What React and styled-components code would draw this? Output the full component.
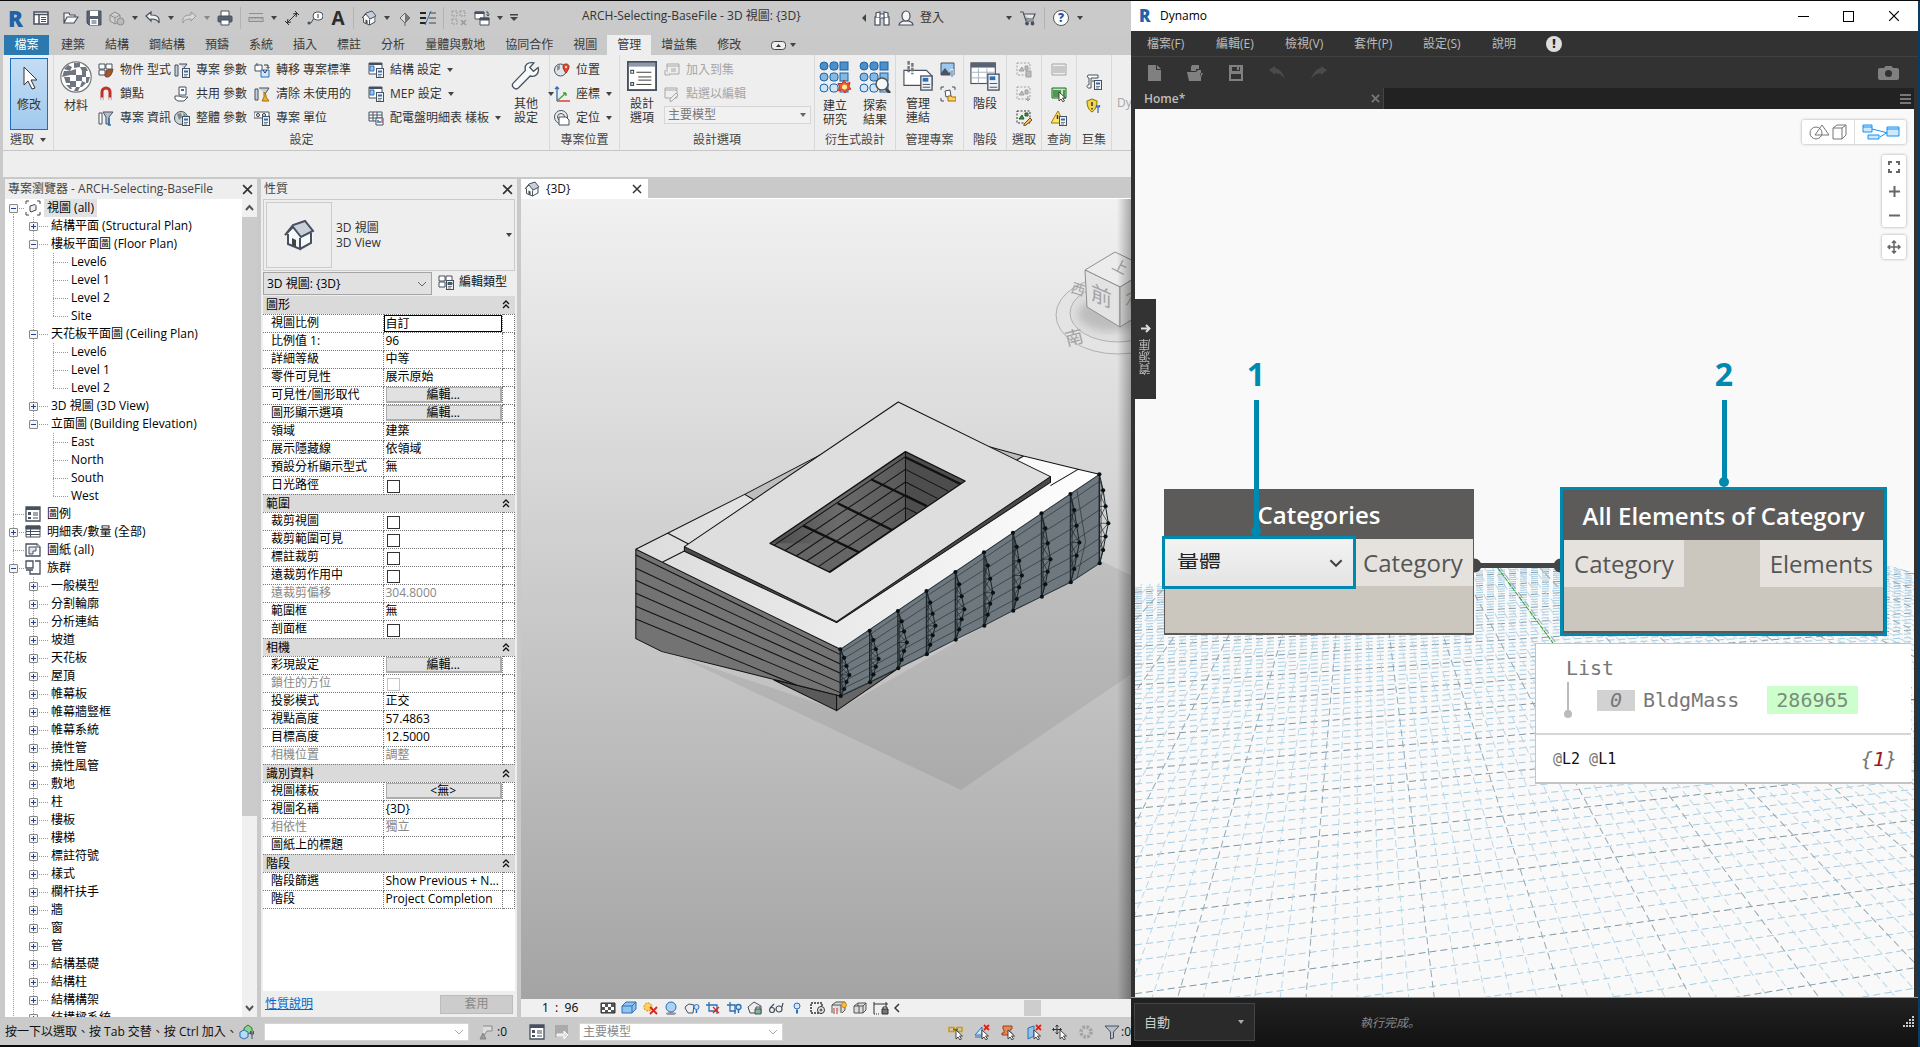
import React from 'react';
import styled, { createGlobalStyle, css } from 'styled-components';

const TEAL = '#0089b0';

const GlobalStyle = createGlobalStyle`
  * { box-sizing: border-box; }
  body {
    margin: 0;
    background: #000;
    color: #111;
    font-family: "Open Sans", "Noto Sans CJK TC", sans-serif;
    font-size: 12px;
    line-height: 16px;
    overflow: hidden;
  }
  button, select, input {
    font: inherit;
    color: inherit;
  }
  button {
    padding: 0;
    border: 0;
    background: none;
  }
  svg { display: block; flex-shrink: 0; }
`;

/* ---------- icons ---------- */

const line = '#47505f';
const blue = '#2c6fb5';
const pale = '#dfe6ee';

const cursorShape = <path d="M8 6v9l2-2 2 3 1.5-1-2-3h3z" fill="#fff" stroke="#333" strokeWidth=".9" />;
const badge = <g><rect x="8.5" y="6.5" width="7" height="9" fill="#eef3f8" stroke={line} /><path d="M10 8.500h4v2h-4z" fill={blue} /><path d="M10 12.500h4M10 14h3" stroke={line} strokeWidth="0.7" /></g>;
const redX = <path d="M10 1l5 5M15 1l-5 5" stroke="#d9261c" strokeWidth="1.8" />;
const bulb = <g><circle cx="12.5" cy="7" r="2.5" fill="#cfe6ff" stroke={blue} /><path d="M12.500 10v3" stroke={blue} strokeWidth="1.5" /></g>;

const icons = {
  panel: <g><rect x="1" y="2" width="14" height="12" fill="#fff" stroke={line} strokeWidth="1.5" /><path d="M1 4.500h14M6 5v9" stroke={line} strokeWidth="1.5" /><path d="M8 7.500h5M8 9.500h5M8 11.500h5" stroke={line} /></g>,
  open: <path d="M1 13V3h5l1 2h5v2M1 13l3-6h11l-4 6z" fill="#f7f7f7" stroke={line} strokeWidth="1.2" />,
  save: <g><path d="M1 1h14v14H3l-2-2z" fill="#5a6374" stroke={line} /><path d="M4 1h8v5H4zM4 9h8v6H4z" fill="#fff" /><path d="M5.500 11h5M5.500 13h5" stroke={line} /></g>,
  sync: <g fill="#d0d0d0" stroke="#8d8d8d"><path d="M1 5l5-3 5 3v6l-5 3-5-3zM1 5l5 3 5-3M6 8v6" /><circle cx="11.5" cy="11.5" r="3.5" fill="#bbb" /></g>,
  undo: <path d="M1 6l5-4v3c5 0 9 1 8 8-1-3-3-4-8-4v2z" fill="#f2f2f2" stroke={line} strokeWidth="1.2" />,
  redo: <path d="M15 6l-5-4v3c-5 0-9 1-8 8 1-3 3-4 8-4v2z" fill="#d8d8d8" stroke="#999" />,
  print: <g><path d="M4 7V1h8v6" fill="#fff" stroke={line} /><rect x="1" y="6" width="14" height="6" rx="1" fill="#5a6374" stroke={line} /><path d="M4 10h8v5H4z" fill="#fff" stroke={line} /></g>,
  measure: <g fill="#c2c2c2" stroke="#8d8d8d"><path d="M1 3.500h14" /><rect x="1" y="7.5" width="14" height="4" /><path d="M4 7v2M7 7v2M10 7v2M13 7v2" /></g>,
  dim: <path d="M3 13L13 3M1 11l4 4M11 1l4 4M13 3l-4 1M13 3l-1 4M3 13l1-4M3 13l4-1" fill="none" stroke="#333" />,
  tag: <g><path d="M1 13h3l3-5" fill="none" stroke={line} /><circle cx="2" cy="13" r="1.5" fill={line} /><rect x="6" y="2" width="10" height="8" rx="4" fill="#fff" stroke={line} /><path d="M11 4v4" stroke="#333" /></g>,
  house: <g stroke={line}><path d="M2 7l3-4 6-2 4 5v5l-6 4-7-3z" fill="#f6f8fa" stroke="none" /><path d="M1 8l4-5 6-2 4 5-6 3-4-5z" fill="#c9d0da" /><path d="M2.500 7.500v5L8.500 15V9.500M8.500 15l5.500-3V7" fill="none" /><path d="M4.500 9.500l2 1v3.500l-2-1z" fill="#444" stroke="none" /></g>,
  diamond: <g><path d="M8 3l5 5-5 5-5-5z" fill="#ddd" stroke="#666" /><path d="M8 3l5 5-5 5z" fill="#777" /><path d="M8 13v3" stroke="#666" /></g>,
  thin: <g><path d="M0 3h6M0 8h6M0 13h6" stroke="#222" strokeWidth="2" /><path d="M9 3h7M9 8h7M9 13h7" stroke="#222" strokeWidth="0.8" /><path d="M11 1L5 15" stroke={blue} /></g>,
  hidden: <g fill="none" stroke="#999"><path d="M1 1h5v5H1zM9 1h5v5H9zM1 9h5v5H1z" strokeDasharray="2 1" /><path d="M10 10l5 5M15 10l-5 5" strokeWidth="1.5" /></g>,
  switch: <g fill="#fff" stroke={line}><path d="M1 2h9v7H1zM6 8h9v7H6z" /><path d="M6 8h9v2H6zM1 2h9v1.500H1z" fill={line} /><path d="M12 2h2v4M12.500 4.500L14 6l1.500-1.500" fill="none" /></g>,
  binoc: <g fill="#fff" stroke={line} strokeWidth="1.2"><rect x="1" y="7" width="5" height="8" /><rect x="10" y="7" width="5" height="8" /><path d="M2 7V3l4-1v5M14 7V3l-4-1v5M6 4h4v4H6" /></g>,
  user: <g fill="#f5f5f5" stroke={line} strokeWidth="1.2"><path d="M1 15c0-3 3-3 4-4h6c1 1 4 1 4 4z" /><ellipse cx="8" cy="6" rx="4" ry="5" /></g>,
  cart: <g fill="none" stroke={line} strokeWidth="1.2"><path d="M0 2h3l3 9h8M4 4h11l-2 5H5" fill="#e7e7e7" /><circle cx="7" cy="13.5" r="1.3" fill={line} /><circle cx="12.5" cy="13.5" r="1.3" fill={line} /></g>,
  material: (
    <g>
      <circle cx="8" cy="8" r="7.6" fill="#fff" stroke="#777" strokeWidth="0.6" />
      <path
        d="M2 4l2-2 2 1-1 2zM7 1h3v2l-3 .500zM10 3h3l1 2h-3zM5 5l3-1v3H5zM11 5h2v3h-2zM1 8l1-3h3v2zM8 7h3v3H8zM2 8h3v3H3zM13 8h2l-1 3h-1zM5 10h3v3H5zM11 10l2 1-2 2h-1zM8 13h2l-1 2H7zM3 12h2l1 2H5z"
        fill="#6f7681"
      />
    </g>
  ),
  objstyle: <g stroke={line} fill="#fff"><path d="M1 2h6v5H1zM8 2h6v5H8zM1 8h6v5H1z" /><path d="M8 9c4-3 5 0 7-2-1 4-2 8-6 8-2 0-3-2-1-3z" fill="#a5572c" stroke="#6d3a1d" /></g>,
  magnet: <g fill="none"><path d="M4 14V6a4 4 0 018 0v8" stroke="#c23127" strokeWidth="3" /><path d="M2.500 13h3M10.500 13h3" stroke="#ddd" strokeWidth="3" /></g>,
  projinfo: <g stroke={line}><path d="M1 3h3v11H1z" fill="#fff" /><path d="M5 2h10l-4 5v7h-3V7z" fill="#b6bfcb" /><path d="M11 8v7M10 15h3" stroke={blue} strokeWidth="1.5" /></g>,
  param: <g><path d="M1 3h3v11H1zM5 2h8l-3 4" fill="#c9d0da" stroke={line} />{badge}</g>,
  shared: <g><path d="M5 1h7v8H5z" fill="#fff" stroke={line} /><path d="M7 3h3v2H7z" fill={blue} /><path d="M1 10h4l3 1h6l-4 4H4l-3-2z" fill="#fff" stroke={line} /></g>,
  globe: <g><circle cx="7" cy="8" r="6.5" fill="#cfd6dc" stroke={line} /><path d="M3 4l4-1 1 4-3 3zM9 3l3 2-2 3z" fill="#7c8a80" />{badge}</g>,
  transfer: <g><path d="M1 3h7v6H1zM3 1v3" fill="#fff" stroke={line} /><path d="M7 8h8v7H7z" fill="#cfe6ff" stroke={blue} /><path d="M9 8l2 3 2-3M10 3h4v3M12.500 5L14 6.500 15.500 5" fill="none" stroke="#333" /></g>,
  purge: <g><path d="M1 3h3v11H1zM5 2h10l-4 6" fill="#c9d0da" stroke={line} /><path d="M10 6l2 3v2l3 4H8l2-4z" fill="#f0b429" stroke="#a86d09" /></g>,
  units: <g><path d="M0 2h15v6H0z" fill="#fff" stroke={line} /><circle cx="4" cy="5" r="1.5" fill="none" stroke="#333" /><circle cx="10" cy="5" r="1.5" fill="none" stroke="#333" />{badge}</g>,
  structset: <g><path d="M1 1h13v11H1z" fill="#fff" stroke={line} /><path d="M1 1h13v2H1z" fill={line} /><path d="M2 4h4v5H2z" fill="#9fc4ea" stroke={blue} />{badge}</g>,
  paneltpl: <g stroke={line}><path d="M1 2h13v9H1zM1 5h13M1 8h13M5 2v9M9 2v9" fill="#fff" /><path d="M8 8h7v7H8z" fill="#fff" /><path d="M10 13v-3M12 13v-2" stroke={blue} strokeWidth="1.5" /><path d="M14 13v-4" stroke="#c23127" /></g>,
  wrench: <path d="M14.500 3.500l-2.500 2-2-2 2.200-2.500C9 .300 7 2 7.700 5L1.200 11.800c-1.500 1.700 1.200 4 2.700 2.600L10.200 8c3 .800 5-1.500 4.300-4.500z" fill="#f8f9fa" stroke={line} strokeWidth="0.7" />,
  location: <g><circle cx="6.5" cy="8" r="6" fill="#dfe4e8" stroke={line} /><path d="M3 4l3-1v4l-3 2z" fill="#8d9994" /><path d="M12 2c4 0 4 4 0 9-4-5-4-9 0-9z" fill="#e0492f" stroke="#a32c17" /><circle cx="12" cy="5" r="1" fill="#fff" /></g>,
  coords: <g fill="none" strokeWidth="1.3"><path d="M3 15V1M1 3l2-2 2 2" stroke={blue} /><path d="M3 15h13" stroke="#d9261c" /><path d="M4 14l8-7M12 7H9M12 7v3" stroke="#36a63a" /></g>,
  position: <g><circle cx="7" cy="7" r="6.5" fill="none" stroke={line} /><circle cx="7" cy="7" r="3.5" fill="none" stroke={line} /><path d="M5 7h7l3 3v5H5z" fill="#fff" stroke={line} /></g>,
  options: <g><rect x="0.5" y="0.5" width="15" height="15" fill="#fff" stroke={line} /><path d="M1 1h14v2H1z" fill="#8d98a8" /><path d="M2 5h1.500v1.500H2zM2 11.500h1.500V13H2z" stroke={line} fill="none" strokeWidth="0.6" /><path d="M5 6h8M6 8.500h7M6 10.200h7M5 12.500h8" stroke="#333" strokeWidth="0.5" /></g>,
  addset: <g fill="#eee" stroke="#a9a9a9"><path d="M3 2h12v10H3zM3 4h12" /><path d="M7 7h5M7 9h5M1 8v5h5" /></g>,
  pickedit: <g fill="#eee" stroke="#a9a9a9"><path d="M1 2h12v10H1zM1 4h12" /><path d="M6 13l6-6 2 2-6 6-2 .500z" /></g>,
  manage: <g><path d="M.500 5h12l3 3v5H.500z" fill="#fff" stroke={line} strokeWidth="0.6" /><path d="M3 0v6M5 1v6" stroke="#777" strokeWidth="1.3" strokeDasharray="2 .6" /><rect x="9.5" y="8" width="6" height="7.5" fill="#eef3f8" stroke={line} strokeWidth="0.7" /><path d="M10.500 9h3v2h-3z" fill={blue} /><path d="M10.500 12.500h4M10.500 14h4" stroke={line} strokeWidth="0.5" /></g>,
  decal: <g><path d="M1 1h13v12H1z" fill="#9cc7ee" stroke={line} /><path d="M1 11l4-5 4 5 2-2 2 2v2H1z" fill="#4a5563" /><path d="M12 7v7" stroke="#f4f4f4" strokeWidth="3" /><path d="M12 8v7" stroke={blue} /></g>,
  starting: <g fill="none" stroke={line}><path d="M1 4V1h3M12 1h3v3M1 12v3h3" /><path d="M5 5l5-1 1 6-5 1z" fill="#fff" /><path d="M8 10h3l1 1h4v4H8z" fill="#ffd25c" stroke="#a86d09" /></g>,
  phase: <g><rect x="0.5" y="1" width="13" height="11" fill="#fff" stroke={line} strokeWidth="0.6" /><path d="M.500 1h13v2.500H.500z" fill="#5a6374" /><path d="M1 6h12M1 9h12M4.500 4v8M9 4v8" stroke="#a8b0bb" strokeWidth="0.5" /><rect x="9.5" y="7" width="6" height="8.5" fill="#eef3f8" stroke={line} strokeWidth="0.7" /><path d="M10.500 8.200h3v2h-3z" fill={blue} /><path d="M10.500 12h4M10.500 14h4" stroke={line} strokeWidth="0.5" /></g>,
  selsave: <g fill="none" stroke="#a0a0a0"><path d="M1 1h13v12H1z" strokeDasharray="2 1.5" /><path d="M3 9l3-4 2 4zM9 4h3v4H9zM10 9h5v6h-5z" fill="#bbb" /></g>,
  selload: <g fill="none" stroke="#a0a0a0"><path d="M1 1h13v12H1z" strokeDasharray="2 1.5" /><path d="M3 9l3-4 2 4zM9 4h3v4H9zM12 10v5l-2-2M12 15l2-2" fill="#bbb" /></g>,
  seledit: <g fill="none" stroke="#333"><path d="M1 1h13v12H1z" strokeDasharray="2 1.5" /><path d="M3 9l3-4 2 4zM9 3h3v3H9z" fill="#3b8f3f" stroke="#246227" /><path d="M8 14l6-6 2 2-6 5-2 1z" fill="#f8c35a" stroke="#6d4a1d" /></g>,
  ids: <g stroke="#a3a3a3"><path d="M1 2h14v11H1z" fill="#eee" /><path d="M3 4v7M5 4v7M7 4v7M9 4v7M11 4v7M13 4v7" /></g>,
  idsel: <g><path d="M1 2h14v10H1z" fill="#bfe8bf" stroke="#176b1b" /><path d="M3 4v7M5 4v7M7 4v7M9 4v7M13 4v7" stroke="#176b1b" strokeWidth="1.3" />{cursorShape}</g>,
  warn: <g><path d="M7 1l6 12H0z" fill="#ffe46b" stroke="#9c7a00" /><path d="M6.500 5v4" stroke="#333" strokeWidth="1.5" />{badge}</g>,
  macro: <g><path d="M2 1h10v3H5v10H2c-2-2-1-3 1-3V4C1 4 1 2 2 1z" fill="#fff" stroke={line} /><path d="M6 7h4" stroke={line} />{badge}</g>,
  macrosec: <g><path d="M1 3l5-2 5 2c0 6-2 9-5 11C3 12 1 9 1 3z" fill="#f3d34b" stroke="#8c7200" /><path d="M6 4v4M6 10v1.500" stroke="#333" strokeWidth="1.5" /><path d="M12 7v8M10.500 7v2h3V7" fill="none" stroke={blue} strokeWidth="1.2" /></g>,
  views: <g fill="none" stroke="#444"><path d="M1 4V1h3M12 1h3v3M1 12v3h3M15 12v3h-3" /><path d="M5 6l5-1.500 1 1V10l-5 2-1-1z" fill="#f0f0f0" /></g>,
  legend: <g><path d="M1 1h14v14H1z" fill="#fff" stroke={line} strokeWidth="1.3" /><path d="M1 1h14v3H1z" fill={line} /><path d="M3 6h3v3H3zM3 11h3v2H3z" fill={line} /><path d="M8 7h5M8 9h5M8 12h5" stroke={line} /></g>,
  schedule: <g stroke={line}><path d="M1 2h14v11H1z" fill="#fff" /><path d="M1 2h14v3H1z" fill={line} /><path d="M1 7.500h14M1 10.500h14M5.500 5v8" /></g>,
  sheets: <g stroke={line} fill="#fff"><path d="M1 2h11l3 3v9H1z" strokeWidth="1.3" /><path d="M4 5h7v4H8v3H4z" fill={pale} /><path d="M12 2v3h3" /></g>,
  family: <g stroke={line} fill="#fff" strokeWidth="1.3"><path d="M1 1h7v7H1zM1 10h7M10 1h5v13H5v-4" /></g>,
  edittype: <g fill="#fff" stroke={line}><path d="M1 2h6v5H1zM8 2h6v5H8zM1 8h6v5H1z" />{badge}</g>,
  worksets: <g><path d="M5 4l4-3 4 3v4l-4 2-4-2z" fill="#8fd18f" stroke="#2d7a30" /><path d="M1 8l4-2 4 2v5l-4 2-4-2z" fill="#b7dcf7" stroke={blue} /><path d="M13 8v7M11.500 7v3h3V7" fill="none" stroke={line} /></g>,
  press: <g fill="#ddd" stroke="#888"><path d="M5 2h9v5H9L5 13" /><path d="M2 15l3-6 3 6z" fill="#999" /></g>,
  grayopt: <g><path d="M1 1h13v12H1z" fill="#aaa" /><path d="M3 10h7v-3l4 4-4 4v-3H3z" fill="#ddd" stroke="#fff" /></g>,
  detail: <g><path d="M1 3h14v10H1z" fill="#555" stroke="#333" /><path d="M2 4h3v3H2zM8 4h3v3H8zM5 7h3v3H5zM11 7h3v3h-3zM2 10h3v2H2zM8 10h3v2H8z" fill="#fff" /></g>,
  box: <g stroke={blue}><path d="M1 6l4-4h10v7l-4 4H1z" fill="#8fc4f0" /><path d="M1 6h10v7M11 6l4-4" fill="none" /></g>,
  sun: <g><circle cx="6" cy="7" r="4" fill="#ffd25c" stroke="#c98a12" strokeDasharray="2 1" /><path d="M8 7l7 7M15 7l-7 7" stroke="#d9261c" strokeWidth="1.8" /></g>,
  shadow: <g><ellipse cx="8" cy="13.5" rx="5" ry="1.5" fill="#999" /><circle cx="8" cy="7" r="5" fill="#a9d2f5" stroke={blue} /></g>,
  render: <g><path d="M2 6l3-2 5 1-1 8H4l-3-5z" fill="#eee" stroke={line} />{bulb}</g>,
  crop: <g fill="none" stroke={blue} strokeWidth="1.3"><path d="M1 5h11v9M4 2v9h9" /><path d="M8 7l6 6M14 7l-6 6" stroke="#d9261c" /></g>,
  cropshow: <g fill="none" stroke={blue} strokeWidth="1.3"><path d="M1 5h8v9M4 2v9h6" />{bulb}</g>,
  lockhouse: <g stroke={line}><path d="M1 7l6-5 7 4v7H3z" fill="#eee" /><path d="M8 9h6v5H8z" fill="#7fb893" /><path d="M9 9V7h4v2" fill="none" /></g>,
  glasses: <g fill="none" stroke={line} strokeWidth="1.2"><circle cx="4" cy="10" r="2.5" /><circle cx="11" cy="9" r="3" /><path d="M2 8l4-4M14 7l1-4" /></g>,
  bulbonly: <g><circle cx="8" cy="6" r="3" fill="#cfe6ff" stroke={blue} /><path d="M8 9.500v4" stroke={blue} strokeWidth="2" /></g>,
  worksh: <g fill="none" stroke="#333"><path d="M1 3h11v10H1z" strokeDasharray="2 1" strokeWidth="1.5" /><circle cx="11" cy="10" r="3.5" fill="#eee" /><circle cx="11" cy="10" r="1" /></g>,
  analyt: <g fill="none" stroke="#555"><path d="M1 5l4-3h9v8l-3 3M1 5h9v8M1 5v8" fill="#ddd" /><path d="M3 8v6M6 8v6" stroke="#c23127" /><circle cx="13" cy="5" r="2.5" fill="#ffbe3d" stroke="#c98a12" /></g>,
  displace: <g fill="#ddd" stroke="#555"><path d="M2 6l4-3h8v7l-3 3H2zM2 6h9v7M11 6l3-3M6 6V3M7 13V6" /></g>,
  constrain: <g fill="none" stroke="#333"><path d="M1 2v12M1 4h14M13 2v5" /><path d="M1 14h6" strokeDasharray="1 1" /><path d="M9 9h6v5H9z" fill="#777" /><path d="M10 9V7h4v2" /></g>,
  link: <g><path d="M1 3.500h5v4H1zM9 3.500h5v4H9z" fill="none" stroke="#d49b00" strokeWidth="1.6" /><path d="M5 5.500h5" stroke="#8c6600" strokeWidth="1.5" />{cursorShape}</g>,
  underlay: <g><path d="M1 11l7-8v8zM1 13h8" fill="#cfe6ff" stroke={blue} />{redX}{cursorShape}</g>,
  pin: <g><path d="M3 2h9v3l-2 1v3h2v2H2V9h2V6L3 5z" fill="#e98552" stroke="#9c4316" />{cursorShape}</g>,
  face: <g><path d="M2 4l6-2v10l-6 3z" fill="#8fc4f0" stroke={blue} />{redX}{cursorShape}</g>,
  drag: <g><path d="M5 1v9M.500 5.500h9M3.500 2.500L5 1l1.500 1.500M3.500 8.500L5 10l1.500-1.500M2 4L.500 5.500 2 7M8 4l1.500 1.500L8 7" fill="none" stroke="#333" />{cursorShape}</g>,
  spinner: <circle cx="8" cy="8" r="5" fill="none" stroke="#a3a3a3" strokeWidth="3.5" strokeDasharray="2.5 1.4" />,
  filter: <path d="M1 2h14l-5.500 6v6l-3 1V8z" fill="#b6bfcb" stroke={line} />,
};

const Icon = ({ name, size = 16 }) => (
  <svg width={size} height={size} viewBox="0 0 16 16" fill="none" aria-hidden="true">{icons[name]}</svg>
);

const StudyIcon = ({ explore }) => (
  <svg width="32" height="32" viewBox="0 0 32 32" stroke="#1b64a8" aria-hidden="true">
    {[1, 12, 23].map((y, row) => (
      <g key={y} fill={['#4d90c9', '#86b8e0', '#cfe4f5'][row]}>
        <circle cx="5" cy={y + 4} r="4" />
        <rect x="11" y={y} width="8" height="8" rx="3" />
        <rect x="21" y={y} width="8" height="8" />
      </g>
    ))}
    {explore
      ? <g><circle cx="23" cy="23" r="6" fill="#f4f8fb" stroke="#555" strokeWidth="1.5" /><path d="M27 28l4 4" stroke="#444" strokeWidth="3" /></g>
      : <g><path d="M25 19l2 3.500 4-1-1 4 2 2.500-4 1-2 3-2.500-3-4 .500 1-4-1.500-3h4z" fill="#f05a28" stroke="#c23127" /><circle cx="25.5" cy="26" r="2.5" fill="#fff0a0" stroke="none" /></g>}
  </svg>
);

const CaretIcon = ({ color = '#444' }) => (
  <svg width="6" height="4" viewBox="0 0 6 4" aria-hidden="true"><path d="M0 0h6L3 4z" fill={color} /></svg>
);

const ChevronDown = ({ color = '#666', size = 10, weight = 1 }) => (
  <svg width={size} height={size} viewBox="0 0 10 10" fill="none" stroke={color} strokeWidth={weight} aria-hidden="true"><path d="M1 3l4 4 4-4" /></svg>
);

const CloseX = ({ size = 10, color = '#333', weight = 1.5 }) => (
  <svg width={size} height={size} viewBox="0 0 10 10" stroke={color} strokeWidth={weight} aria-hidden="true"><path d="M1 1l8 8M9 1L1 9" /></svg>
);

/* ---------- shell ---------- */

const Shell = styled.div`
  display: grid;
  grid-template-columns: minmax(0, 1131fr) minmax(0, 789fr);
  height: 100vh;
  padding-top: 1px;
  background: #0b0b0b;
`;

const Revit = styled.div`
  display: flex;
  flex-direction: column;
  min-width: 0;
  min-height: 0;
  margin-bottom: 2px;
  background: #c9c9c9;
  overflow: hidden;
`;

const TitleBar = styled.header`
  display: flex;
  align-items: center;
  height: 34px;
  flex-shrink: 0;
  background: #cacaca;
  color: #333;
`;

const QuickBar = styled.div`
  display: flex;
  align-items: center;
  gap: 7px;
  width: 574px;
  padding-left: 8px;
  flex-shrink: 0;
`;

const LogoLetter = styled.span`
  width: 18px;
  font-size: ${({ $size }) => $size || 22}px;
  line-height: 20px;
  font-weight: 800;
  color: #1f62a8;
`;

const IconButton = styled.button`
  display: flex;
  align-items: center;
  justify-content: center;
  flex-shrink: 0;
`;

const TextTool = styled.button`
  width: 16px;
  font-size: 19px;
  line-height: 20px;
  font-weight: 700;
  color: #2c2c2c;
`;

const BarDivider = styled.span`
  width: 1px;
  height: 22px;
  background: #b3b3b3;
`;

const BarGap = styled.span`
  width: 0;
`;

const WindowTitle = styled.h1`
  margin: 0;
  width: 288px;
  flex-shrink: 0;
  padding: 0 0 4px 8px;
  font-size: 12px;
  font-weight: 400;
  line-height: 18px;
  white-space: nowrap;
`;

const InfoCenter = styled.div`
  display: flex;
  align-items: center;
  gap: 8px;
`;

const SignIn = styled.button`
  display: flex;
  align-items: center;
  gap: 6px;
  width: 100px;
`;

const HelpCircle = styled.button`
  width: 16px;
  height: 16px;
  border: 1px solid #555;
  border-radius: 50%;
  background: #fff;
  color: #2457b0;
  font-weight: 800;
  line-height: 14px;
`;

const TabBar = styled.nav`
  display: flex;
  align-items: center;
  height: 20px;
  padding-left: 4px;
  flex-shrink: 0;
`;

const FileTab = styled.button`
  width: 45px;
  height: 20px;
  margin-right: 2px;
  background: #2a7ab0;
  color: #fff;
`;

const RibbonTab = styled.button`
  height: 20px;
  padding: 0 10px;
  white-space: nowrap;
  color: #3a3a3a;
  background: ${({ $active }) => ($active ? '#eeeeee' : 'transparent')};
`;

const RibbonToggle = styled.button`
  display: flex;
  align-items: center;
  gap: 4px;
  margin-left: 20px;
`;

const Ribbon = styled.div`
  display: flex;
  height: 96px;
  flex-shrink: 0;
  margin-left: 3px;
  background: #eeeeee;
  border-bottom: 1px solid #c6c6c6;
  overflow: hidden;
`;

const Panel = styled.section`
  display: flex;
  flex-direction: column;
  width: ${({ $width }) => $width}px;
  flex-shrink: 0;
  padding-top: 3px;
  border-right: 1px solid #d8d8d8;
`;

const PanelBody = styled.div`
  display: flex;
  justify-content: ${({ $center }) => ($center ? 'center' : 'flex-start')};
  gap: 4px;
  height: 72px;
  padding: 0 4px;
`;

const PanelTitle = styled.h2`
  display: flex;
  align-items: center;
  justify-content: center;
  gap: 6px;
  margin: 0;
  height: 20px;
  font-size: 12px;
  font-weight: 400;
  color: #444;
  white-space: nowrap;
`;

const BigButton = styled.button`
  display: flex;
  flex-direction: column;
  align-items: center;
  gap: 6px;
  width: 36px;
  flex-shrink: 0;
  padding-top: 3px;
  line-height: 14px;
  color: #333;
  ${({ $pressed }) => $pressed && css`
    width: 38px;
    margin-left: 3px;
    border: 1px solid #1a6fc4;
    background: linear-gradient(#c4dcf4, #a2caee);
  `}
`;

const SmallColumn = styled.div`
  display: flex;
  flex-direction: column;
  justify-content: ${({ $center }) => ($center ? 'center' : 'flex-start')};
  width: ${({ $width }) => ($width ? `${$width}px` : 'auto')};
  flex-shrink: 0;
`;

const SmallButton = styled.button`
  display: flex;
  align-items: center;
  gap: 6px;
  height: 24px;
  white-space: nowrap;
  color: ${({ disabled }) => (disabled ? '#a6a6a6' : '#333')};
`;

const ColumnDivider = styled.span`
  width: 1px;
  margin: 0 5px 0 0;
  background: #cfcfcf;
`;

const AddinLabel = styled.button`
  padding: 24px 0 0 1px;
  color: #a6a6a6;
`;

const SelectBox = styled.div`
  position: relative;
  display: flex;
  align-items: center;
  justify-content: flex-end;
  width: ${({ $width }) => ($width ? `${$width}px` : 'auto')};
  height: ${({ $height }) => $height || 18}px;
  flex-shrink: 0;
  padding-right: 4px;
  border: 1px solid ${({ $border }) => $border || '#d6d6d6'};
  background: ${({ $bg }) => $bg || '#fff'};
  color: ${({ $color }) => $color || '#888'};

  select {
    position: absolute;
    inset: 0;
    width: 100%;
    padding: 0 3px;
    border: 0;
    appearance: none;
    background: transparent;
    line-height: 16px;
  }
`;

const OptionsBar = styled.div`
  height: 26px;
  flex-shrink: 0;
  margin-left: 3px;
  background: #eeeeee;
`;

const Workspace = styled.main`
  display: flex;
  flex: 1;
  min-height: 0;
  gap: 4px;
  padding: 2px 0 1px 5px;
`;

const Dock = styled.aside`
  display: flex;
  flex-direction: column;
  width: ${({ $width }) => $width}px;
  flex-shrink: 0;
  min-height: 0;
  background: #eeeeee;
`;

const DockHeader = styled.div`
  display: flex;
  align-items: center;
  justify-content: space-between;
  height: 20px;
  flex-shrink: 0;
  padding: 0 4px 0 3px;
  color: #444;
`;

/* ---------- project browser ---------- */

const TreeArea = styled.div`
  display: flex;
  flex: 1;
  min-height: 0;
  background: #fff;
`;

const Tree = styled.ul`
  flex: 1;
  margin: 0;
  padding: 0;
  list-style: none;
  overflow: hidden;
`;

const TreeRow = styled.li`
  display: flex;
  align-items: center;
  height: 18px;
  white-space: nowrap;
`;

const dots = (dir) => `repeating-linear-gradient(${dir}, #999 0 1px, transparent 1px 2px)`;

const Guide = styled.span`
  display: flex;
  align-items: center;
  width: ${({ $wide }) => ($wide ? 23 : 20)}px;
  height: 18px;
  flex-shrink: 0;
  padding-left: 4px;
  background-repeat: no-repeat;
  background-image: ${dots('180deg')}, ${dots('90deg')};
  background-position: 8px ${({ $start }) => ($start ? 9 : 0)}px, 8px 9px;
  background-size:
    ${({ $v, $end, $start }) => ($v ? `1px ${$end || $start ? 9 : 18}px` : '0 0')},
    ${({ $h }) => ($h ? '15px 1px' : '0 0')};
`;

const Expander = styled.button`
  display: flex;
  align-items: center;
  justify-content: center;
  width: 9px;
  height: 9px;
  border: 1px solid #888;
  border-radius: 1px;
  background: #f5f5f5;
`;

const TreeLabel = styled.span`
  padding: 0 ${({ $root }) => ($root ? 3 : 0)}px 0 3px;
  margin-left: ${({ $root }) => ($root ? 3 : 0)}px;
  line-height: 18px;
  color: #000;
  background: ${({ $selected }) => ($selected ? '#e2e2e2' : 'transparent')};
`;

const ScrollTrack = styled.div`
  display: flex;
  flex-direction: column;
  align-items: center;
  width: 15px;
  padding: 4px 0;
  gap: 4px;
  background: #f0f0f0;
`;

const ScrollThumb = styled.span`
  width: 100%;
  flex: 0 0 74%;
  margin-bottom: auto;
  background: #cbcbcb;
`;

const families = ['一般模型', '分割輪廓', '分析連結', '坡道', '天花板', '屋頂', '帷幕板', '帷幕牆豎框', '帷幕系統', '撓性管', '撓性風管', '敷地', '柱', '樓板', '樓梯', '標註符號', '樣式', '欄杆扶手', '牆', '窗', '管', '結構基礎', '結構柱', '結構構架', '結構樑系統'];

const tree = [
  { text: '視圖 (all)', depth: 0, icon: 'views', sign: '-', selected: true, start: true },
  { text: '結構平面 (Structural Plan)', depth: 1, sign: '+' },
  { text: '樓板平面圖 (Floor Plan)', depth: 1, sign: '-' },
  { text: 'Level6', depth: 2 },
  { text: 'Level 1', depth: 2 },
  { text: 'Level 2', depth: 2 },
  { text: 'Site', depth: 2, end: true },
  { text: '天花板平面圖 (Ceiling Plan)', depth: 1, sign: '-' },
  { text: 'Level6', depth: 2 },
  { text: 'Level 1', depth: 2 },
  { text: 'Level 2', depth: 2, end: true },
  { text: '3D 視圖 (3D View)', depth: 1, sign: '+' },
  { text: '立面圖 (Building Elevation)', depth: 1, sign: '-', end: true },
  { text: 'East', depth: 2, last: true },
  { text: 'North', depth: 2, last: true },
  { text: 'South', depth: 2, last: true },
  { text: 'West', depth: 2, last: true, end: true },
  { text: '圖例', depth: 0, icon: 'legend' },
  { text: '明細表/數量 (全部)', depth: 0, icon: 'schedule', sign: '+' },
  { text: '圖紙 (all)', depth: 0, icon: 'sheets' },
  { text: '族群', depth: 0, icon: 'family', sign: '-' },
  ...families.map((text) => ({ text, depth: 1, sign: '+' })),
];

const ExpandMark = ({ sign, label }) => (
  <Expander aria-label={label}>
    <svg width="5" height="5" viewBox="0 0 5 5" stroke="#27408b"><path d={sign === '+' ? 'M0 2.500h5M2.500 0v5' : 'M0 2.500h5'} /></svg>
  </Expander>
);

const ProjectBrowser = () => (
  <Dock $width={252}>
    <DockHeader>
      <span>專案瀏覽器 - ARCH-Selecting-BaseFile</span>
      <IconButton aria-label="關閉專案瀏覽器"><CloseX size={11} /></IconButton>
    </DockHeader>
    <TreeArea>
      <Tree>
        {tree.map((row, i) => (
          <TreeRow key={i}>
            <Guide $v $h={row.depth === 0} $start={row.start}>
              {row.depth === 0 && row.sign && <ExpandMark sign={row.sign} label={row.text} />}
            </Guide>
            {row.depth > 0 && (
              <Guide $v={!row.last} $h={row.depth === 1} $end={row.depth === 1 && row.end} $wide={row.depth === 1}>
                {row.depth === 1 && <ExpandMark sign={row.sign} label={row.text} />}
              </Guide>
            )}
            {row.depth === 2 && <Guide $v $h $end={row.end} $wide />}
            {row.icon && <Icon name={row.icon} />}
            <TreeLabel $root={row.depth === 0} $selected={row.selected}>{row.text}</TreeLabel>
          </TreeRow>
        ))}
      </Tree>
      <ScrollTrack>
        <svg width="9" height="10" viewBox="0 0 9 10" fill="none" stroke="#555" strokeWidth="2"><path d="M1 7l3.500-4L8 7" /></svg>
        <ScrollThumb />
        <svg width="9" height="10" viewBox="0 0 9 10" fill="none" stroke="#555" strokeWidth="2"><path d="M1 3l3.500 4L8 3" /></svg>
      </ScrollTrack>
    </TreeArea>
  </Dock>
);

/* ---------- properties ---------- */

const PropsBody = styled.div`
  display: flex;
  flex-direction: column;
  flex: 1;
  min-height: 0;
  padding: 0 2px;
`;

const TypeBox = styled.div`
  display: flex;
  align-items: center;
  gap: 4px;
  height: 72px;
  flex-shrink: 0;
  padding: 2px;
  border: 1px solid #cbcbcb;
  color: #333;
`;

const TypeThumb = styled.div`
  display: flex;
  align-items: center;
  justify-content: center;
  width: 66px;
  height: 66px;
  border: 1px solid #cbcbcb;
`;

const TypeName = styled.div`
  flex: 1;
  line-height: 15px;
`;

const FilterRow = styled.div`
  display: flex;
  align-items: center;
  gap: 6px;
  height: 25px;
  flex-shrink: 0;
`;

const EditType = styled.button`
  display: flex;
  align-items: center;
  gap: 5px;
  padding-bottom: 4px;
`;

const TableArea = styled.div`
  flex: 1;
  min-height: 0;
  background: #fff;
  overflow: hidden;
`;

const PropTable = styled.table`
  width: 100%;
  table-layout: fixed;
  border-collapse: collapse;
  line-height: 15px;
  color: #000;
`;

const GroupCell = styled.th`
  height: 18px;
  padding: 0 5px 0 3px;
  background: #dadada;
  text-align: left;
  font-weight: 400;

  div {
    display: flex;
    align-items: center;
    justify-content: space-between;
  }
`;

const PropCell = styled.td`
  height: 18px;
  padding: 0 0 0 ${({ $name }) => ($name ? 8 : 2)}px;
  border: 1px dotted #777;
  border-left-width: ${({ $name }) => ($name ? 0 : 1)}px;
  vertical-align: top;
  overflow: hidden;
  white-space: nowrap;
  text-overflow: ellipsis;
  color: ${({ $dim }) => ($dim ? '#888' : '#000')};
`;

const ValueButton = styled.button`
  display: block;
  width: 100%;
  height: 16px;
  line-height: 14px;
  background: #e1e1e1;
  border: 1px solid #adadad;
  border-right-width: 2px;
  border-bottom-width: 2px;
`;

const ValueInput = styled.input`
  display: block;
  width: calc(100% + 2px);
  height: 17px;
  margin-left: -2px;
  padding: 0 1px;
  border: 1px solid #000;
  background: #fff;
  line-height: 14px;
`;

const Check = styled.input`
  display: block;
  appearance: none;
  width: 13px;
  height: 13px;
  margin: 3px 0 0 1px;
  border: 1px solid #333;
  background: #fff;

  &:disabled { border-color: #c4c4c4; }
`;

const PropFooter = styled.div`
  display: flex;
  align-items: center;
  justify-content: space-between;
  height: 26px;
  flex-shrink: 0;
  padding: 0 2px;

  a { color: #0066cc; }

  button {
    width: 73px;
    height: 19px;
    border: 1px solid #bcbcbc;
    background: #cccccc;
    color: #888;
  }
`;

const propGroups = [
  ['圖形', [
    ['視圖比例', '自訂', 'input'], ['比例值 1:', '96'], ['詳細等級', '中等'], ['零件可見性', '展示原始'],
    ['可見性/圖形取代', '編輯...', 'button'], ['圖形顯示選項', '編輯...', 'button'], ['領域', '建築'],
    ['展示隱藏線', '依領域'], ['預設分析顯示型式', '無'], ['日光路徑', '', 'check'],
  ]],
  ['範圍', [
    ['裁剪視圖', '', 'check'], ['裁剪範圍可見', '', 'check'], ['標註裁剪', '', 'check'], ['遠裁剪作用中', '', 'check'],
    ['遠裁剪偏移', '304.8000', 'dim'], ['範圍框', '無'], ['剖面框', '', 'check'],
  ]],
  ['相機', [
    ['彩現設定', '編輯...', 'button'], ['鎖住的方位', '', 'checkoff'], ['投影模式', '正交'], ['視點高度', '57.4863'],
    ['目標高度', '12.5000'], ['相機位置', '調整', 'dim'],
  ]],
  ['識別資料', [['視圖樣板', '<無>', 'button'], ['視圖名稱', '{3D}'], ['相依性', '獨立', 'dim'], ['圖紙上的標題', '']]],
  ['階段', [['階段篩選', 'Show Previous + N...'], ['階段', 'Project Completion']]],
];

const PropValue = ({ id, name, value, kind }) => {
  if (kind === 'input') return <ValueInput id={id} defaultValue={value} />;
  if (kind === 'button') return <ValueButton aria-label={`${name} ${value}`}>{value}</ValueButton>;
  if (kind === 'check' || kind === 'checkoff') return <Check id={id} type="checkbox" disabled={kind === 'checkoff'} />;
  return value;
};

const Properties = () => (
  <Dock $width={256}>
    <DockHeader>
      <span>性質</span>
      <IconButton aria-label="關閉性質"><CloseX size={11} /></IconButton>
    </DockHeader>
    <PropsBody>
      <TypeBox>
        <TypeThumb><Icon name="house" size={32} /></TypeThumb>
        <TypeName>3D 視圖<br />3D View</TypeName>
        <CaretIcon />
      </TypeBox>
      <FilterRow>
        <SelectBox $width={169} $height={23} $bg="#e1e1e1" $border="#a5a5a5" $color="#000">
          <ChevronDown />
          <select aria-label="性質篩選"><option>3D 視圖: {'{3D}'}</option></select>
        </SelectBox>
        <EditType><Icon name="edittype" />編輯類型</EditType>
      </FilterRow>
      <TableArea>
        <PropTable>
          <colgroup>
            <col width="120" />
            <col />
            <col width="12" />
          </colgroup>
          <tbody>
            {propGroups.map(([group, rows]) => (
              <React.Fragment key={group}>
                <tr>
                  <GroupCell colSpan={3}>
                    <div>
                      {group}
                      <svg width="8" height="9" viewBox="0 0 8 9" fill="none" stroke="#111" strokeWidth="1.3"><path d="M1 4l3-3 3 3M1 8l3-3 3 3" /></svg>
                    </div>
                  </GroupCell>
                </tr>
                {rows.map(([name, value, kind]) => {
                  const dim = kind === 'dim' || kind === 'checkoff';
                  const id = `prop-${group}-${name}`;
                  const labelled = ['input', 'check', 'checkoff'].includes(kind);
                  return (
                    <tr key={name}>
                      <PropCell $name $dim={dim}>{labelled ? <label htmlFor={id}>{name}</label> : name}</PropCell>
                      <PropCell $dim={dim}><PropValue id={id} name={name} value={value} kind={kind} /></PropCell>
                      <PropCell />
                    </tr>
                  );
                })}
              </React.Fragment>
            ))}
          </tbody>
        </PropTable>
      </TableArea>
      <PropFooter>
        <a href="#help">性質說明</a>
        <button disabled>套用</button>
      </PropFooter>
    </PropsBody>
  </Dock>
);

/* ---------- 3D view ---------- */

const ViewPane = styled.section`
  display: flex;
  flex-direction: column;
  flex: 1;
  min-width: 0;
`;

const ViewTabs = styled.div`
  height: 20px;
  flex-shrink: 0;
  border-bottom: 1px solid #fff;
`;

const ViewTab = styled.div`
  display: flex;
  align-items: center;
  gap: 6px;
  width: 127px;
  height: 19px;
  padding: 0 6px 0 3px;
  background: #fff;

  span { flex: 1; }
`;

const Viewport = styled.div`
  flex: 1;
  min-height: 0;
  background: linear-gradient(#f1f1f1, #a4a4a4);

  svg { width: 100%; height: 100%; }
`;

const ViewControls = styled.div`
  display: flex;
  align-items: center;
  gap: 5px;
  height: 18px;
  flex-shrink: 0;
  padding-left: 21px;
  background: #f0f0f0;
`;

const ScaleText = styled.button`
  width: 53px;
  text-align: left;
  font-family: "Noto Sans", sans-serif;
  white-space: pre;
`;

const HScrollThumb = styled.span`
  width: 17px;
  height: 16px;
  margin: 0 90px 0 auto;
  background: #cdcdcd;
`;

const trussTops = [[698, 868], [783, 812], [865, 753], [948, 693], [1032, 636], [1115, 577], [1199, 518], [1282, 460], [1366, 402], [1450, 343]];
const trussFeet = [1008, 967, 925, 883, 839, 797, 752, 710, 667, 610];
const bulge = [[0, 0], [0.18, 11], [0.36, 18], [0.55, 26], [0.7, 18], [0.85, 11], [1, 1]];

const Truss = ({ index }) => {
  const [x, top] = trussTops[index];
  const h = trussFeet[index] - top;
  const pts = bulge.map(([f, dx]) => [x + dx, top + f * h]);
  return (
    <g>
      <path d={`M${x} ${top}V${top + h}`} strokeWidth="4" />
      <path d={`M${x + 5} ${top + 0.08 * h}V${top + 0.95 * h}`} strokeWidth="2" />
      <polyline points={pts.join(' ')} />
      {pts.slice(1, -1).map(([px, py], i) => (
        <path
          key={i}
          strokeWidth="2"
          d={`M${x} ${top + (i + 0.3) * h / 6}L${px} ${py}L${x} ${top + (i + 2) * h / 6}M${x} ${py}H${px}`}
        />
      ))}
      {pts.map(([px, py], i) => <ellipse key={i} cx={px} cy={py} rx="6" ry="6" fill="#0c1012" stroke="none" />)}
    </g>
  );
};

const facadeFeet = trussFeet.map((y, i) => `${trussTops[i][0]} ${y}`).reverse().join(' ');

const Building = () => (
  <g transform="translate(600 360) scale(0.3444 0.3333)" stroke="#111" strokeLinejoin="round">
    <path d="M230 890L1048 1290L1560 930V655L1450 600L690 1050z" fill="#000" fillOpacity="0.07" stroke="none" />
    <path d="M104 568L420 403L648 280L866 200L1130 260L1450 343L698 868z" fill="url(#roof)" stroke="none" />
    <path d="M420 403L648 280L448 420z" fill="#bdbdbd" stroke="none" />
    <path d="M1130 260L1230 288L1210 300z" fill="#bdbdbd" stroke="none" />
    <g fill="none" strokeWidth="3">
      <path d="M104 568L420 403L648 280M1130 260L1230 288L1388 328L1450 343M420 403L448 420M197 520L257 552M182 606L245 573M1210 300L1230 288M1388 328L1308 377" />
    </g>
    <path d="M505 960L560 973L687 1005V1052z" fill="#5a5a5a" strokeWidth="3" />
    <path d="M687 1005L698 1008L862 928L687 1052z" fill="#666" strokeWidth="3" />
    <path d="M104 568L698 868V1008L570 975L410 934L180 875L104 836z" fill="#737373" strokeWidth="3" />
    <path d="M104 585L698 884M104 625L698 912M104 661L698 940M104 700L698 968M104 739L698 998M104 777L570 975" fill="none" strokeWidth="3" />
    <path d="M245 562V574L687 788L1308 367V350z" fill="#4a4a4a" strokeWidth="3" />
    <path d="M866 126L1308 350L687 785L245 560z" fill="#dedede" strokeWidth="3" />
    <clipPath id="court"><path d="M887 275L1060 363L668 637L494 550z" /></clipPath>
    <g clipPath="url(#court)">
      <path d="M887 275L1060 363L668 637L494 550z" fill="#656565" stroke="none" />
      <path d="M887 275L1060 363L887 480z" fill="#4d4d4d" stroke="none" />
      <path d="M887 275V480L790 550L494 550z" fill="url(#wall)" stroke="none" />
      <g fill="none" strokeWidth="3">
        <path d="M887 275V482M887 290L505 556M887 328L535 573M887 366L570 588M887 405L600 603M887 443L635 619M887 482L665 636" />
        <path d="M887 328L1012 394M887 366L980 415M887 405L950 438M887 443L920 460" />
        <path d="M887 292L1048 373M787 358L948 438M690 430L848 510M590 497L752 577" strokeWidth="7" />
      </g>
    </g>
    <path d="M887 275L1060 363L668 637L494 550z" fill="none" strokeWidth="4" />
    <path d={`M698 868L1450 343L${facadeFeet}z`} fill="#6e787e" stroke="#26343a" strokeWidth="3" />
    <g fill="none" stroke="#26343a" strokeWidth="2">
      {[0.08, 0.24, 0.4, 0.56, 0.72, 0.87].map((f) => (
        <polyline key={f} points={trussTops.map(([x, y], i) => `${x} ${y + f * (trussFeet[i] - y)}`).join(' ')} />
      ))}
      <path d="M1385 392L1410 545L1385 655" />
    </g>
    <g fill="none" stroke="#1c282d" strokeWidth="3">
      {trussTops.map((_, i) => <Truss key={i} index={i} />)}
    </g>
  </g>
);

const ViewCube = () => (
  <g fill="none" stroke="#b0b0b0">
    <ellipse cx="1118" cy="315" rx="62" ry="39" fill="#e4e4e4" />
    <ellipse cx="1118" cy="313" rx="48" ry="29" fill="#dedede" />
    <ellipse cx="1110" cy="314" rx="32" ry="17" fill="#bdbdbd" stroke="none" filter="url(#soft)" />
    <path d="M1085 270L1115 252L1150 269L1120 287z" fill="#ececec" stroke="#8f8f8f" />
    <path d="M1085 270L1120 287V327L1087 307z" fill="#e3e3e3" stroke="#8f8f8f" />
    <path d="M1120 287L1150 269V308L1120 327z" fill="#d6d6d6" stroke="#8f8f8f" />
    <g fill="#a3a3a3" stroke="none" fontSize="21">
      <text transform="translate(1091 299) skewY(24)">前</text>
      <text transform="translate(1111 268) rotate(27)" fontSize="15">上</text>
      <text transform="translate(1125 309) skewY(-27)">右</text>
      <text transform="translate(1070 292) rotate(18)" fontSize="14">西</text>
      <text transform="translate(1067 346) rotate(-14)" fontSize="18">南</text>
    </g>
  </g>
);

const viewIcons = ['detail', 'box', 'sun', 'shadow', 'render', 'crop', 'cropshow', 'lockhouse', 'glasses', 'bulbonly', 'worksh', 'analyt', 'displace', 'constrain'];

const View3D = () => (
  <ViewPane>
    <ViewTabs>
      <ViewTab>
        <Icon name="house" />
        <span>{'{3D}'}</span>
        <IconButton aria-label="關閉視圖"><CloseX /></IconButton>
      </ViewTab>
    </ViewTabs>
    <Viewport>
      <svg viewBox="521 199 610 800" preserveAspectRatio="xMidYMid slice" role="img" aria-label="3D">
        <defs>
          <linearGradient id="roof" x1="0" x2="1"><stop offset="0" stopColor="#dcdcdc" /><stop offset=".6" stopColor="#efefef" /><stop offset="1" stopColor="#fff" /></linearGradient>
          <linearGradient id="wall" x1="0" x2="1"><stop offset="0" stopColor="#4c4c4c" /><stop offset=".5" stopColor="#6b6b6b" /><stop offset="1" stopColor="#595959" /></linearGradient>
          <linearGradient id="edge" x1="0" x2="1"><stop offset="0" stopColor="#000" stopOpacity="0" /><stop offset="1" stopColor="#000" stopOpacity="0.3" /></linearGradient>
          <filter id="soft"><feGaussianBlur stdDeviation="4" /></filter>
        </defs>
        <Building />
        <ViewCube />
        <rect x="1117" y="199" width="14" height="800" fill="url(#edge)" />
      </svg>
    </Viewport>
    <ViewControls>
      <ScaleText>1  :  96</ScaleText>
      {viewIcons.map((name) => <IconButton key={name} aria-label={name}><Icon name={name} /></IconButton>)}
      <svg width="6" height="10" viewBox="0 0 6 10" fill="none" stroke="#333" strokeWidth="1.5"><path d="M5 1L1 5l4 4" /></svg>
      <HScrollThumb />
    </ViewControls>
  </ViewPane>
);

/* ---------- status bar ---------- */

const StatusBar = styled.footer`
  display: flex;
  align-items: center;
  height: 27px;
  flex-shrink: 0;
  padding-left: 5px;
  background: #cacaca;
  white-space: nowrap;
`;

const StatusText = styled.span`
  width: 225px;
`;

const StatusGroup = styled.div`
  display: flex;
  align-items: center;
  gap: ${({ $gap }) => $gap}px;
  margin-left: ${({ $end }) => ($end ? 'auto' : 0)};
`;

const StatusPress = styled.span`
  display: flex;
  gap: 3px;
  width: 42px;
`;

const Status = () => (
  <StatusBar>
    <StatusGroup $gap={9}>
      <StatusText>按一下以選取、按 Tab 交替、按 Ctrl 加入、</StatusText>
      <Icon name="worksets" />
      <SelectBox $width={205}><ChevronDown color="#aaa" /><select aria-label="工作集"><option> </option></select></SelectBox>
      <StatusPress><Icon name="press" />:0</StatusPress>
      <Icon name="legend" />
      <Icon name="grayopt" />
      <SelectBox $width={204}><ChevronDown color="#aaa" /><select aria-label="作用中的設計選項"><option>主要模型</option></select></SelectBox>
    </StatusGroup>
    <StatusGroup $gap={10} $end>
      {['link', 'underlay', 'pin', 'face', 'drag', 'spinner'].map((name) => (
        <IconButton key={name} aria-label={name}><Icon name={name} /></IconButton>
      ))}
      <StatusGroup $gap={1}><Icon name="filter" />:0</StatusGroup>
    </StatusGroup>
  </StatusBar>
);

/* ---------- ribbon ---------- */

const Small = ({ icon, caret, disabled, children, label }) => (
  <SmallButton disabled={disabled} aria-label={label}>
    <Icon name={icon} />
    {children}
    {caret && <CaretIcon />}
  </SmallButton>
);

const RibbonPanels = () => (
  <Ribbon>
    <Panel $width={51}>
      <PanelBody>
        <BigButton $pressed>
          <svg width="30" height="30" viewBox="0 0 30 30"><path d="M10 5v18l4-4 4 8 3-1-4-8h6z" fill="#fff" stroke="#333" /></svg>
          修改
        </BigButton>
      </PanelBody>
      <PanelTitle>選取 <CaretIcon /></PanelTitle>
    </Panel>
    <Panel $width={496}>
      <PanelBody>
        <BigButton><Icon name="material" size={32} />材料</BigButton>
        <SmallColumn $width={72}>
          <Small icon="objstyle">物件 型式</Small>
          <Small icon="magnet">鎖點</Small>
          <Small icon="projinfo">專案 資訊</Small>
        </SmallColumn>
        <SmallColumn $width={76}>
          <Small icon="param">專案 參數</Small>
          <Small icon="shared">共用 參數</Small>
          <Small icon="globe">整體  參數</Small>
        </SmallColumn>
        <SmallColumn $width={101}>
          <Small icon="transfer">轉移 專案標準</Small>
          <Small icon="purge">清除 未使用的</Small>
          <Small icon="units">專案 單位</Small>
        </SmallColumn>
        <ColumnDivider />
        <SmallColumn $width={136}>
          <Small icon="structset" caret>結構 設定</Small>
          <Small icon="structset" caret>MEP 設定</Small>
          <Small icon="paneltpl" caret>配電盤明細表 樣板</Small>
        </SmallColumn>
        <BigButton><Icon name="wrench" size={30} /><span>其他<br />設定</span></BigButton>
        <SmallColumn $center><CaretIcon /></SmallColumn>
      </PanelBody>
      <PanelTitle>設定</PanelTitle>
    </Panel>
    <Panel $width={70}>
      <PanelBody>
        <SmallColumn>
          <Small icon="location">位置</Small>
          <Small icon="coords" caret>座標</Small>
          <Small icon="position" caret>定位</Small>
        </SmallColumn>
      </PanelBody>
      <PanelTitle>專案位置</PanelTitle>
    </Panel>
    <Panel $width={195}>
      <PanelBody>
        <BigButton><Icon name="options" size={30} /><span>設計<br />選項</span></BigButton>
        <SmallColumn $width={147}>
          <Small icon="addset" disabled>加入到集</Small>
          <Small icon="pickedit" disabled>點選以編輯</Small>
          <SelectBox $bg="#f1f1f1" $color="#777">
            <CaretIcon color="#666" />
            <select aria-label="設計選項"><option>主要模型</option></select>
          </SelectBox>
        </SmallColumn>
      </PanelBody>
      <PanelTitle>設計選項</PanelTitle>
    </Panel>
    <Panel $width={81}>
      <PanelBody $center>
        <BigButton><StudyIcon /><span>建立<br />研究</span></BigButton>
        <BigButton><StudyIcon explore /><span>探索<br />結果</span></BigButton>
      </PanelBody>
      <PanelTitle>衍生式設計</PanelTitle>
    </Panel>
    <Panel $width={68}>
      <PanelBody>
        <BigButton><Icon name="manage" size={30} /><span>管理<br />連結</span></BigButton>
        <SmallColumn>
          <Small icon="decal" label="貼花類型" />
          <Small icon="starting" label="起始視圖" />
        </SmallColumn>
      </PanelBody>
      <PanelTitle>管理專案</PanelTitle>
    </Panel>
    <Panel $width={43}>
      <PanelBody $center><BigButton><Icon name="phase" size={30} />階段</BigButton></PanelBody>
      <PanelTitle>階段</PanelTitle>
    </Panel>
    <Panel $width={35}>
      <PanelBody $center>
        <SmallColumn>
          <Small icon="selsave" label="儲存" disabled />
          <Small icon="selload" label="載入" disabled />
          <Small icon="seledit" label="編輯" />
        </SmallColumn>
      </PanelBody>
      <PanelTitle>選取</PanelTitle>
    </Panel>
    <Panel $width={35}>
      <PanelBody $center>
        <SmallColumn>
          <Small icon="ids" label="選取項目 ID" disabled />
          <Small icon="idsel" label="依 ID 選取" />
          <Small icon="warn" label="警告" />
        </SmallColumn>
      </PanelBody>
      <PanelTitle>查詢</PanelTitle>
    </Panel>
    <Panel $width={35}>
      <PanelBody $center>
        <SmallColumn $center>
          <Small icon="macro" label="巨集管理員" />
          <Small icon="macrosec" label="巨集安全性" />
        </SmallColumn>
      </PanelBody>
      <PanelTitle>巨集</PanelTitle>
    </Panel>
    <PanelBody>
      <SmallColumn $center>
        <AddinLabel disabled>Dy</AddinLabel>
      </SmallColumn>
    </PanelBody>
  </Ribbon>
);

const tabNames = ['建築', '結構', '鋼結構', '預鑄', '系統', '插入', '標註', '分析', '量體與敷地', '協同合作', '視圖', '管理', '增益集', '修改'];

const Tool = ({ name }) => <IconButton aria-label={name}><Icon name={name} /></IconButton>;

const RevitWindow = () => (
  <Revit>
    <TitleBar>
      <QuickBar>
        <LogoLetter>R</LogoLetter>
        <Tool name="panel" />
        <BarGap />
        <Tool name="open" />
        <Tool name="save" />
        <Tool name="sync" />
        <CaretIcon />
        <Tool name="undo" />
        <CaretIcon />
        <Tool name="redo" />
        <CaretIcon color="#888" />
        <Tool name="print" />
        <BarDivider />
        <Tool name="measure" />
        <CaretIcon />
        <Tool name="dim" />
        <Tool name="tag" />
        <TextTool aria-label="文字">A</TextTool>
        <BarDivider />
        <Tool name="house" />
        <CaretIcon />
        <Tool name="diamond" />
        <Tool name="thin" />
        <BarDivider />
        <Tool name="hidden" />
        <Tool name="switch" />
        <CaretIcon />
        <svg width="8" height="8" viewBox="0 0 8 8"><path d="M0 0h8v1.500H0zM0 3h8L4 7z" fill="#444" /></svg>
      </QuickBar>
      <WindowTitle>ARCH-Selecting-BaseFile - 3D 視圖: {'{3D}'}</WindowTitle>
      <InfoCenter>
        <svg width="4" height="8" viewBox="0 0 4 8"><path d="M4 0v8L0 4z" fill="#444" /></svg>
        <Tool name="binoc" />
        <SignIn><Icon name="user" />登入</SignIn>
        <CaretIcon />
        <Tool name="cart" />
        <BarDivider />
        <HelpCircle aria-label="說明">?</HelpCircle>
        <CaretIcon />
      </InfoCenter>
    </TitleBar>
    <TabBar>
      <FileTab>檔案</FileTab>
      {tabNames.map((name) => <RibbonTab key={name} $active={name === '管理'}>{name}</RibbonTab>)}
      <RibbonToggle aria-label="最小化">
        <svg width="15" height="9" viewBox="0 0 15 9"><rect x="0.5" y="0.5" width="14" height="8" rx="3" fill="#eee" stroke="#444" /><path d="M5 6l2.500-3L10 6z" fill="#333" /></svg>
        <CaretIcon />
      </RibbonToggle>
    </TabBar>
    <RibbonPanels />
    <OptionsBar />
    <Workspace>
      <ProjectBrowser />
      <Properties />
      <View3D />
    </Workspace>
    <Status />
  </Revit>
);

/* ---------- dynamo ---------- */

const Dynamo = styled.div`
  display: flex;
  flex-direction: column;
  min-width: 0;
  min-height: 0;
  background: #323232;
  border-right: 2px solid #0b3c66;
  color: #bdbdbd;
`;

const DynTitle = styled.header`
  display: flex;
  align-items: center;
  gap: 3px;
  height: 30px;
  flex-shrink: 0;
  padding: 0 18px 0 8px;
  background: #fff;
  color: #000;
`;

const WindowButtons = styled.div`
  display: flex;
  gap: 34px;
  margin-left: auto;
`;

const DynMenu = styled.nav`
  display: flex;
  align-items: center;
  height: 26px;
  flex-shrink: 0;
  padding-left: 16px;
  border-bottom: 1px solid #404040;

  button {
    width: 69px;
    text-align: left;
  }
  button:last-of-type { width: 54px; }
`;

const Alert = styled.span`
  width: 16px;
  height: 16px;
  border-radius: 50%;
  background: #dedede;
  color: #222;
  font-weight: 800;
  text-align: center;
`;

const DynTools = styled.div`
  display: flex;
  align-items: center;
  gap: 24px;
  height: 31px;
  flex-shrink: 0;
  padding: 0 19px 0 15px;

  button:last-child { margin-left: auto; }
`;

const DynTabs = styled.div`
  display: flex;
  align-items: center;
  justify-content: space-between;
  height: 21px;
  flex-shrink: 0;
  margin: 0 4px;
  padding-right: 3px;
  background: #222;
`;

const DynTab = styled.div`
  display: flex;
  align-items: center;
  justify-content: space-between;
  width: 249px;
  height: 21px;
  padding: 0 3px 0 9px;
  background: #323232;
  border-right: 1px solid #444;
  font-weight: 600;
`;

const DynCanvas = styled.main`
  position: relative;
  flex: 1;
  min-height: 0;
  margin: 0 4px;
  background: #f9f9f9;
  overflow: hidden;
  color: #555;
`;

const Backdrop = styled.svg`
  position: absolute;
  inset: 0;
  width: 100%;
  height: 100%;
`;

const Node = styled.section`
  position: absolute;
  left: ${({ $x }) => $x}px;
  top: ${({ $y }) => $y}px;
  width: ${({ $w }) => $w}px;
  height: ${({ $h }) => $h}px;
  border: 1px solid #5b5957;
  border-bottom-width: 2px;
  background: #cbc6be;
  outline: ${({ $focus }) => ($focus ? `3px solid ${TEAL}` : 'none')};
`;

const NodeTitle = styled.h3`
  margin: 0;
  height: 49px;
  background: #5d5b59;
  color: #fff;
  font-size: 24px;
  font-weight: 600;
  line-height: 50px;
  text-align: center;
  white-space: nowrap;
`;

const NodeRow = styled.div`
  display: flex;
  justify-content: space-between;
  height: 47px;
`;

const Port = styled.span`
  min-width: 120px;
  padding: 0 10px;
  background: #e5e2dd;
  font-size: 24px;
  line-height: 48px;
  text-align: center;
`;

const CategoryPicker = styled.div`
  position: relative;
  display: flex;
  align-items: center;
  justify-content: flex-end;
  flex: 1;
  padding-right: 10px;
  outline: 3px solid ${TEAL};
  background: linear-gradient(#f3f3f3, #e4e4e4);

  select {
    position: absolute;
    inset: 0;
    width: 100%;
    padding: 0 0 4px 12px;
    border: 0;
    appearance: none;
    background: transparent;
    color: #222;
    font-size: 22px;
  }
`;

const Callout = styled.div`
  position: absolute;
  left: ${({ $x }) => $x}px;
  top: 245px;
  display: flex;
  flex-direction: column;
  align-items: center;
  width: 20px;
  color: ${TEAL};
  font-size: 32px;
  font-weight: 700;
  line-height: 40px;

  &::after {
    content: "";
    width: 5px;
    height: ${({ $len }) => $len}px;
    margin-top: 6px;
    background: ${TEAL};
  }
`;

const Dot = styled.span`
  position: absolute;
  bottom: -5px;
  width: 10px;
  height: 10px;
  border-radius: 50%;
  background: ${TEAL};
`;

const Preview = styled.div`
  position: absolute;
  left: 400px;
  top: 534px;
  right: 3px;
  border: 1px solid #c4c4c4;
  border-right: 0;
  border-bottom-width: 2px;
  background: #fff;
  font-family: "DejaVu Sans Mono", monospace;
  font-size: 20px;
  line-height: 28px;
  color: #777;
`;

const PreviewList = styled.div`
  height: 91px;
  padding: 10px 0 0 30px;
  border-bottom: 2px solid #d6d6d6;
`;

const PreviewItem = styled.div`
  display: flex;
  align-items: center;
  gap: 8px;
`;

const Stem = styled.svg`
  margin: 0 17px 0 -2px;
`;

const Index = styled.em`
  width: 38px;
  background: #d2d2d2;
  line-height: 21px;
  text-align: center;
`;

const ElementId = styled.span`
  margin-left: 20px;
  padding: 0 9px;
  background: #ccffcc;
  color: #7a8f7a;
`;

const PreviewLevels = styled.div`
  display: flex;
  align-items: center;
  justify-content: space-between;
  height: 47px;
  padding: 0 14px 0 17px;

  span { font-size: 15px; }
  b { font-weight: 400; color: #111; }
  em b { color: #a01818; }
`;

const LibraryTab = styled.button`
  position: absolute;
  left: 0;
  top: 190px;
  display: flex;
  align-items: center;
  justify-content: center;
  gap: 6px;
  width: 21px;
  height: 100px;
  background: #333;
  color: #bbb;
  writing-mode: vertical-rl;

  span { transform: rotate(180deg); }
`;

const CanvasTools = styled.div`
  position: absolute;
  top: 11px;
  right: 8px;
  display: flex;
  flex-direction: column;
  align-items: flex-end;
  gap: 8px;
`;

const ToolCard = styled.div`
  display: flex;
  flex-direction: ${({ $column }) => ($column ? 'column' : 'row')};
  margin-bottom: ${({ $column }) => ($column ? 0 : 3)}px;
  border-radius: 2px;
  background: #fff;
  box-shadow: 0 0 3px rgba(0, 0, 0, 0.35);

  button {
    display: flex;
    align-items: center;
    justify-content: center;
    width: ${({ $column }) => ($column ? 24 : 52)}px;
    height: 24px;
  }
  button + button { border-left: ${({ $column }) => ($column ? 0 : 1)}px solid #ddd; }
`;

const RunBar = styled.footer`
  display: flex;
  align-items: center;
  height: 50px;
  flex-shrink: 0;
  padding: 0 3px 2px;
  background: linear-gradient(#222, #111);
  border-top: 1px solid #999;
`;

const RunSelect = styled(SelectBox)`
  width: 121px;
  height: 38px;
  padding-right: 10px;
  border-color: #444;
  background: #2a2a2a;
  color: #ccc;

  select {
    padding-left: 9px;
    font-size: 13px;
  }
`;

const RunStatus = styled.em`
  flex: 1;
  padding-left: 105px;
  font-family: "Noto Sans CJK JP", sans-serif;
  color: #888;
`;

const HORIZON = 375;
const VX = 1357;

const GroundGrid = () => {
  const across = [];
  for (let n = -12; n < 68; n += 1) {
    const y = HORIZON + 1 / (0.001706 + n * 0.0000486);
    const slope = (HORIZON - y) / (5500 - VX);
    across.push([n % 5 === 0, `M1135 ${y + slope * (1135 - VX)}L1920 ${y + slope * (1920 - VX)}`]);
  }
  const away = [];
  for (let k = -32; k < 72; k += 1) {
    const dx = 60 + k * 20;
    const at = (y) => VX + (dx * (y - HORIZON)) / 485;
    away.push([k % 5 === 0, `M${at(565)} 565L${at(1000)} 1000`]);
  }
  return (
    <g clipPath="url(#ground)" fill="none">
      {across.map(([bold, d]) => <path key={d} d={d} stroke={bold ? '#7f98a6' : '#a9cde2'} strokeDasharray="7 4" />)}
      {away.map(([bold, d]) => <path key={d} d={d} stroke={bold ? '#93a9b5' : '#bcd8e8'} strokeDasharray="7 4" />)}
      <path d="M1497 567L1553 643" stroke="#2ca02c" strokeDasharray="5 1" />
      <path d="M1906 699h7" stroke="#d9261c" />
    </g>
  );
};

const DynToolIcon = ({ d, dim, w = 16 }) => (
  <svg width={w} height="16" viewBox="0 0 16 16" fill={dim ? '#4b4b4b' : '#808080'} aria-hidden="true"><path d={d} fillRule="evenodd" /></svg>
);

const dynMenu = ['檔案(F)', '編輯(E)', '檢視(V)', '套件(P)', '設定(S)', '說明'];

const DynamoWindow = () => (
  <Dynamo>
    <DynTitle>
      <LogoLetter $size={17}>R</LogoLetter>
      Dynamo
      <WindowButtons>
        <IconButton aria-label="最小化"><svg width="11" height="11" viewBox="0 0 11 11"><path d="M0 5.500h11" stroke="#000" /></svg></IconButton>
        <IconButton aria-label="最大化"><svg width="11" height="11" viewBox="0 0 11 11"><rect x="0.5" y="0.5" width="10" height="10" fill="none" stroke="#000" /></svg></IconButton>
        <IconButton aria-label="關閉"><CloseX size={12} color="#000" weight={1} /></IconButton>
      </WindowButtons>
    </DynTitle>
    <DynMenu>
      {dynMenu.map((item) => <button key={item}>{item}</button>)}
      <Alert>!</Alert>
    </DynMenu>
    <DynTools>
      <IconButton aria-label="新建"><DynToolIcon d="M2 0h8v5h5v11H2zM11 0l4 4h-4z" /></IconButton>
      <IconButton aria-label="開啟"><DynToolIcon w={18} d="M5 0h7v4h-3v2H4V2zM0 7h9l2-2h3v11H2zM13 8h3l-2 4z" /></IconButton>
      <IconButton aria-label="儲存"><DynToolIcon d="M1 0h14v16H1zM4 2v4h8V2zM3 9v5h10V9zM9 2h2v3H9z" /></IconButton>
      <IconButton aria-label="復原"><DynToolIcon dim w={18} d="M0 5l6-4v2c5 1 8 5 10 11-3-4-6-6-10-6v2z" /></IconButton>
      <IconButton aria-label="重做"><DynToolIcon dim w={18} d="M16 5l-6-4v2C5 4 2 8 0 14c3-4 6-6 10-6v2z" /></IconButton>
      <IconButton aria-label="相機">
        <svg width="21" height="16" viewBox="0 0 21 16"><path d="M2 3h4l1.500-2h6L15 3h4a2 2 0 012 2v8a2 2 0 01-2 2H2a2 2 0 01-2-2V5a2 2 0 012-2z" fill="#808080" /><circle cx="10.5" cy="8.5" r="3.5" fill="#323232" /></svg>
      </IconButton>
    </DynTools>
    <DynTabs>
      <DynTab>Home*<IconButton aria-label="關閉 Home"><CloseX size={9} color="#777" weight={2} /></IconButton></DynTab>
      <IconButton aria-label="工作區清單"><svg width="11" height="10" viewBox="0 0 11 10" stroke="#777" strokeWidth="2"><path d="M0 1h11M0 5h11M0 9h11" /></svg></IconButton>
    </DynTabs>
    <DynCanvas>
      <Backdrop viewBox="1135 109 778 888" preserveAspectRatio="xMinYMin slice" aria-hidden="true">
        <clipPath id="ground"><path d="M1135 584L1500 567L1887 565L1920 574V1000H1135z" /></clipPath>
        <GroundGrid />
        <path d="M1476 565H1560" stroke="#454545" strokeWidth="5" />
        <circle cx="1474" cy="565" r="7" fill="#454545" />
        <circle cx="1560" cy="565" r="7" fill="#454545" />
      </Backdrop>
      <Node $x={29} $y={380} $w={310} $h={146}>
        <NodeTitle>Categories</NodeTitle>
        <NodeRow>
          <CategoryPicker>
            <ChevronDown color="#444" size={14} weight={1.5} />
            <select aria-label="Categories"><option>量體</option></select>
          </CategoryPicker>
          <Port>Category</Port>
        </NodeRow>
      </Node>
      <Node $x={428} $y={381} $w={321} $h={143} $focus>
        <NodeTitle>All Elements of Category</NodeTitle>
        <NodeRow>
          <Port>Category</Port>
          <Port>Elements</Port>
        </NodeRow>
      </Node>
      <Callout $x={111} $len={131}>1<Dot /></Callout>
      <Callout $x={579} $len={82}>2<Dot /></Callout>
      <Preview>
        <PreviewList>
          List
          <PreviewItem>
            <Stem width="8" height="36" viewBox="0 0 8 36"><path d="M3 0h2v32H3z" fill="#bbb" /><circle cx="4" cy="32" r="4" fill="#bbb" /></Stem>
            <Index>0</Index>
            BldgMass
            <ElementId>286965</ElementId>
          </PreviewItem>
        </PreviewList>
        <PreviewLevels>
          <span>@<b>L2</b> @<b>L1</b></span>
          <em>{'{'}<b>1</b>{'}'}</em>
        </PreviewLevels>
      </Preview>
      <LibraryTab>
        <svg width="10" height="9" viewBox="0 0 10 9" fill="none" stroke="#ddd" strokeWidth="2"><path d="M0 4.500h8M5 1l3.500 3.500L5 8" /></svg>
        <span>資源庫</span>
      </LibraryTab>
      <CanvasTools>
        <ToolCard>
          <button aria-label="幾何圖形">
            <svg width="38" height="16" viewBox="0 0 38 16" fill="none" stroke="#777"><circle cx="7" cy="9" r="6" /><path d="M6 11l7-10 7 10zM24 4h9v11h-9zM24 4l4-3h9v10l-4 4M33 4l4-3" /></svg>
          </button>
          <button aria-label="圖表">
            <svg width="38" height="16" viewBox="0 0 38 16" fill="#cfe8ff" stroke="#1490f0"><path d="M10 5l16 4M18 13l8-5" /><path d="M1 1h9v7H1zM6 11h11v4H6zM25 3h12v9H25z" /><path d="M1 3h9M25 5h12" /></svg>
          </button>
        </ToolCard>
        <ToolCard $column>
          <button aria-label="縮放至佈滿"><svg width="12" height="12" viewBox="0 0 12 12" fill="none" stroke="#666" strokeWidth="2"><path d="M1 4V1h3M8 1h3v3M1 8v3h3M11 8v3H8" /></svg></button>
          <button aria-label="放大"><svg width="11" height="11" viewBox="0 0 11 11" stroke="#666" strokeWidth="2"><path d="M0 5.500h11M5.500 0v11" /></svg></button>
          <button aria-label="縮小"><svg width="11" height="11" viewBox="0 0 11 11" stroke="#666" strokeWidth="2"><path d="M0 5.500h11" /></svg></button>
        </ToolCard>
        <ToolCard $column>
          <button aria-label="平移"><svg width="14" height="14" viewBox="0 0 14 14" fill="none" stroke="#666" strokeWidth="1.5"><path d="M7 1v12M1 7h12M5 3l2-2 2 2M5 11l2 2 2-2M3 5L1 7l2 2M11 5l2 2-2 2" /></svg></button>
        </ToolCard>
      </CanvasTools>
    </DynCanvas>
    <RunBar>
      <RunSelect>
        <CaretIcon color="#aaa" />
        <select aria-label="執行模式"><option>自動</option></select>
      </RunSelect>
      <RunStatus>執行完成。</RunStatus>
      <svg width="12" height="12" viewBox="0 0 12 12" fill="#ccc"><path d="M9 0h2v2H9zM6 3h2v2H6zM9 3h2v2H9zM3 6h2v2H3zM6 6h2v2H6zM9 6h2v2H9zM0 9h2v2H0zM3 9h2v2H3zM6 9h2v2H6zM9 9h2v2H9z" /></svg>
    </RunBar>
  </Dynamo>
);

const App = () => (
  <>
    <GlobalStyle />
    <Shell>
      <RevitWindow />
      <DynamoWindow />
    </Shell>
  </>
);

export default App;
